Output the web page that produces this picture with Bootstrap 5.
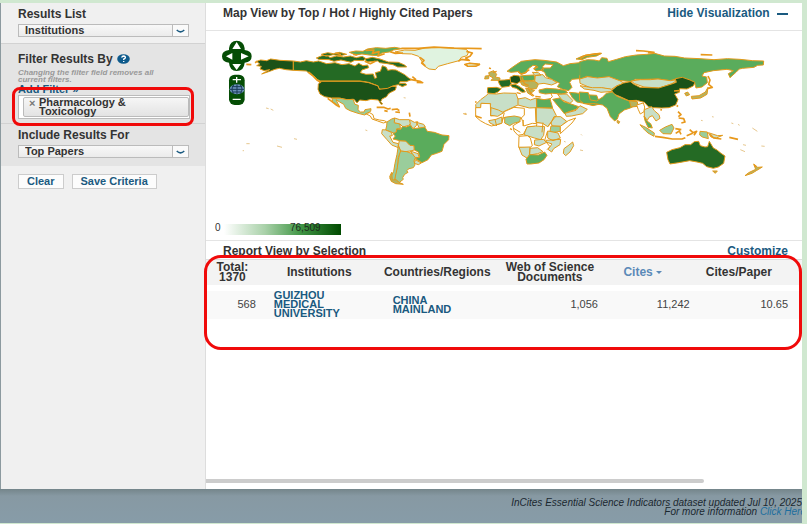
<!DOCTYPE html>
<html lang="en">
<head>
<meta charset="utf-8">
<meta name="viewport" content="width=device-width, initial-scale=1">
<title>Essential Science Indicators</title>
<link href="https://cdn.jsdelivr.net/npm/bootstrap@5.3.0/dist/css/bootstrap.min.css" rel="stylesheet">
<style>
body{font-family:"Liberation Sans",Arial,sans-serif;font-size:12px;line-height:14px;color:#333;background:#d0e8d0}
a{color:#1a5a80;text-decoration:none}
.frame{min-height:100vh;padding:3px 5px 1px 0}
.work{border-left:1px solid #8c9a9f;background:#fff}
.side{flex:0 0 205px;background:#f0f0f0;border-right:1px solid #ddd}
.side-part{padding:4px 16px 0 17px}
.side-part.first{height:40px}
.shade{background:#e4e4e4;border-top:1px solid #d2d2d2}
.side h2,.heading{font-size:12px;line-height:14px;font-weight:700;margin:0;color:#333}
.picker{height:13px;margin-top:3px;border:1px solid #bbb;background:linear-gradient(#f8f8f8,#ebebeb)}
.picker select{appearance:none;border:0;background:none;font-size:11px;line-height:11px;font-weight:700;color:#333;padding:0 0 0 6px;min-width:0}
.picker svg{border-left:1px solid #bbb;background:#fafafa}
.note{font-size:8px;line-height:7px;font-weight:700;font-style:italic;color:#999;margin:3px 0 0;padding-right:12px}
.add{font-size:11px;line-height:12px;font-weight:700}
.chips{border:1px solid #bbb;background:#fff;padding:1px 0 1px 4px;height:24px;margin-right:-1px}
.chip{border:1px solid #bbb;border-radius:2px;background:linear-gradient(#f6f6f6,#e3e3e3);font-size:11px;line-height:9px;font-weight:700;padding:0 0 0 5px;height:20px}
.chip button{border:0;background:none;padding:0;color:#777;font-size:11px;line-height:9px;font-weight:700;width:10px;height:10px;text-align:left}
.act{border:1px solid #ccc;background:#fcfcfc;color:#1a5a80;font-size:11px;line-height:13px;font-weight:700;padding:0 8px;border-radius:0}
.ring{position:absolute;border:3px solid #f00a0a;pointer-events:none}
.ring-side{left:11px;right:11px;top:43px;height:39px;border-radius:8px}
.ring-table{left:-2px;right:0;top:14px;height:95px;border-radius:17px}
.map-head{height:28px;padding:3px 13px 0 17px;border-bottom:1px solid #e4e4e4}
.map-box{border-bottom:1px solid #e4e4e4}
.map-box>svg{display:block;width:100%;height:auto}
.report-head{height:18px;padding:3px 14px 0 17px}
.report{table-layout:fixed;width:100%}
.report th{height:25px;background:#f3f3f3;font-size:12px;line-height:10px;padding:0;text-align:center;vertical-align:middle;border-top:1px solid #ddd}
.report tbody td{height:28px;background:#f9f9f9;font-size:11px;line-height:9px;padding:0 5px 0 0;text-align:right;vertical-align:middle;color:#444}
.report tbody .space td{height:6px;background:#fff;line-height:0}
.report tbody .nm{text-align:left;padding:0 0 0 13px;font-weight:700}
.report tbody .nm.second{padding-left:15px}
.report .c1{padding-right:2px}.report .c5{padding-right:12px}.report .c6{padding-right:19px}
.report tbody td:last-child{padding-right:14px}
.c5 a{color:#5b8ab8}
.track{height:4px;width:83.5%;background:#ccc;border-radius:0 3px 3px 0;margin-bottom:6px}
.foot{height:34px;padding-top:9px;background:linear-gradient(#74858a,#8799a3 7px,#879ca8);font-size:10px;line-height:9px;font-style:italic;color:#1b2830;text-align:right;white-space:nowrap;overflow:hidden}
.foot p{margin:0}.foot p+p{margin-right:-4px}
.foot a{color:#1d6e9e}
.land path{stroke:#e29a1b;stroke-width:3;stroke-linejoin:round}
.a1{fill:#1b5218}.a2{fill:#246a24}.a3{fill:#5aac5c}.a4{fill:#9acd9b}.a5{fill:#c8dfc7}.a6{fill:#e0f3e0}.a0{fill:#fff}.ao{fill:#b5b35f}
.land .bits{fill:none;stroke:#e8981b;stroke-width:5}
.land .dots{fill:none;stroke:#d9ab55;stroke-width:2}
</style>
<script src="https://cdn.jsdelivr.net/npm/bootstrap@5.3.0/dist/js/bootstrap.bundle.min.js"></script>
</head>
<body>
<div class="frame d-flex flex-column">
<div class="work d-flex flex-grow-1">
<aside class="side">
  <section class="side-part first">
    <h2><label for="list">Results List</label></h2>
    <div class="picker d-flex"><select id="list" class="flex-grow-1"><option>Institutions</option></select><svg width="16" height="11" viewBox="0 0 16 11"><path d="M4 5Q8 9 12 5" fill="none" stroke="#1a5a80" stroke-width="1.6"/></svg></div>
  </section>
  <section class="side-part shade position-relative pb-1">
    <h2 class="d-flex align-items-center pt-1">Filter Results By
      <svg class="ms-1" width="13" height="10" viewBox="0 0 13 10"><ellipse cx="6.5" cy="5" rx="6.3" ry="4.8" fill="#0d5a8c"/><path d="M4.7 3.7Q5 2 6.7 2Q8.5 2.1 8.4 3.5Q8.2 4.5 6.7 5.1V6.1M6.7 7V8" fill="none" stroke="#fff" stroke-width="1.3"/></svg></h2>
    <p class="note">Changing the filter field removes all current filters.</p>
    <a class="add d-block" href="#">Add Filter »</a>
    <div class="chips"><div class="chip d-flex"><button type="button" aria-label="Remove filter">×</button><span>Pharmacology &amp;<br>Toxicology</span></div></div>
    <div class="ring ring-side"></div>
  </section>
  <section class="side-part shade pb-2">
    <h2><label for="papers">Include Results For</label></h2>
    <div class="picker d-flex"><select id="papers" class="flex-grow-1"><option>Top Papers</option></select><svg width="16" height="11" viewBox="0 0 16 11"><path d="M4 5Q8 9 12 5" fill="none" stroke="#1a5a80" stroke-width="1.6"/></svg></div>
  </section>
  <section class="side-part pt-2 d-flex gap-2">
    <button class="act" type="button">Clear</button>
    <button class="act" type="button">Save Criteria</button>
  </section>
</aside>
<main class="flex-grow-1 d-flex flex-column">
  <div class="map-head d-flex justify-content-between">
    <h1 class="heading">Map View by Top / Hot / Highly Cited Papers</h1>
    <a class="heading" href="#"><span style="color:#1a5a80">Hide Visualization</span> <svg class="ms-1" width="12" height="8" viewBox="0 0 12 8"><path d="M0 4H11" stroke="#1a5a80" stroke-width="2"/></svg></a>
  </div>
  <div class="map-box">
  <svg viewBox="206 31 596 209" role="img" aria-label="World map of cited papers">
    <defs><linearGradient id="scale"><stop offset="0" stop-color="#fff"/><stop offset=".35" stop-color="#a9d1a9"/><stop offset=".65" stop-color="#429747"/><stop offset="1" stop-color="#004a00"/></linearGradient></defs>
    <!-- the Americas -->
    <g class="land" transform="translate(240 30) scale(.33333)">
      <path class="a1" d="M50 94L62 90L80 92L92 87L120 91L160 93L160 121L138 119L118 115L105 118L92 123L65 132L89 119L73 122L60 117L64 109L50 107L59 102Z"/>
      <path class="a2" d="M160 93L181 96L199 92L220 96L236 93L260 101L285 98L306 104L327 101L345 108L356 100L369 107L383 105L386 113L366 120L361 128L378 133L400 132L404 145L410 143L406 128L421 124L427 107L439 112L443 121L455 119L468 120L481 127L494 134L505 143L514 149L499 155L480 155L478 160L495 160L501 164L487 170L475 164L458 168L446 175L423 178L416 175L415 168L386 157L360 153L242 153L233 149L222 139L211 133L199 123L160 121Z"/>
      <path class="a2" d="M229 84L246 77L263 76L270 83L290 78L311 81L331 78L349 83L367 79L378 86L370 92L344 91L333 97L303 90L282 94L267 89L236 88ZM244 73L263 68L280 71L298 67L320 73L300 77L279 74L259 79ZM374 87L397 82L420 87L445 96L475 97L494 105L500 111L473 111L459 104L442 101L419 98L413 93L381 96Z"/>
      <path class="a3" d="M328 67L347 63L369 64L382 57L409 53L437 55L464 52L487 56L461 60L448 66L426 69L414 77L387 75L366 72L347 75Z"/>
      <path class="a1" d="M242 154L360 154L386 158L414 168L418 178L443 175L456 169L469 170L466 180L450 188L444 193L440 200L426 207L422 215L428 222L423 223L415 210L393 208L378 212L359 210L351 219L342 208L320 209L298 204L274 204L254 200L240 192L234 178L235 163Z"/>
      <path class="a4" d="M276 205L301 205L321 209L339 208L345 223L355 226L354 239L361 246L372 246L375 239L393 236L392 244L383 249L374 255L354 250L330 242L317 235L311 223L299 216L288 209L294 221L299 231L288 222L278 216Z"/>
      <path class="a0" d="M377 251L389 248L399 254L402 266L418 270L433 272L440 276L430 279L413 273L396 267L391 258Z"/>
      <path class="a4" d="M441 276L455 267L464 264L463 278L480 282L481 296L470 297L468 313L454 306L437 300L440 288Z"/>
      <path class="a5" d="M464 264L479 269L507 269L514 279L506 286L489 291L480 282L463 278ZM427 299L437 300L454 307L457 317L449 318L459 337L475 341L475 353L455 345L441 329L425 311ZM478 332L498 333L510 346L523 347L523 360L511 363L496 365L482 363L475 347Z"/>
      <path class="a3" d="M459 311L469 306L470 297L482 298L488 289L499 291L511 286L519 296L537 294L553 289L562 304L583 307L606 315L627 317L626 329L612 343L606 364L590 370L574 375L564 389L546 398L526 386L539 380L535 366L523 360L522 347L510 346L497 333L479 332L459 327L466 318Z"/>
      <path class="a5" d="M509 269L523 277L533 275L529 287L519 296L511 284ZM529 277L551 283L556 291L538 294ZM511 363L534 371L538 383L524 382ZM526 389L544 399L535 404L523 400Z"/>
      <path class="a4" d="M480 363L500 365L517 371L526 383L522 393L525 405L520 413L507 416L500 422L504 427L494 433L488 443L490 448L478 457L464 449L467 431L472 411L475 389Z"/>
      <path class="a4" d="M475 347L482 363L475 382L472 412L464 449L456 455L450 445L461 424L465 400L471 373Z"/>
      <path class="ao" d="M455 427L449 440L454 454L467 461L490 463L475 456L469 449L457 450Z"/>
      <path class="a6" d="M465 66L494 60L525 61L555 54L602 53L642 55L679 58L686 66L681 77L664 82L657 92L623 101L595 109L586 119L567 117L555 109L545 93L536 79L515 72L487 71Z"/>
      <path class="a6" d="M677 103L689 99L720 102L709 108L685 109Z"/>
      <path class="bits" d="M540 82L552 91L545 99L556 108M679 64L697 69L690 79L677 84L688 91L664 88L655 94M484 55L535 55L582 51L642 54L725 56M410 232L431 232L444 237L452 235M455 239L471 237L478 242M433 242L443 244M466 246L480 247M508 248L510 260M510 148L526 151L540 154L548 158L530 157M517 140L528 149M263 205L276 215L290 226L299 231M205 126L216 135L232 151L243 158M19 103L34 104M45 98L52 94M340 73L352 75M286 69L303 74M450 65L466 70L489 69M378 61L402 60L397 70L417 65L414 78L434 71M374 94L391 101L406 94"/>
      <path class="dots" d="M78 234L86 236M92 237L100 241M376 300L382 302M19 341L29 341M111 348L126 352M162 326L171 328M8 362L12 362M491 203L497 204M675 249L681 253"/>
    </g>
    <!-- Europe and Africa -->
    <g class="land" transform="translate(380 20) scale(.33333)">
      <path class="a3" d="M381 154L394 144L410 133L424 124L447 121L465 119L492 121L530 126L550 137L570 131L599 128L622 124L665 126L665 185L655 184L632 170L599 176L576 178L569 187L576 202L566 212L548 208L532 200L539 190L515 178L499 169L494 157L483 151L488 144L511 144L519 134L496 132L488 139L491 150L469 153L461 147L469 137L459 136L444 147L439 158L424 163L413 155L393 157Z"/>
      <path class="a3" d="M588 117L610 107L645 101L665 100L650 108L622 112L606 119Z"/>
      <path class="ao" d="M326 158L341 152L350 163L346 171L360 174L359 181L333 181L340 174L329 168ZM316 168L327 167L326 176L314 177Z"/>
      <path class="a2" d="M323 203L349 202L364 206L354 216L342 221L322 219ZM354 181L373 180L391 178L394 190L388 199L365 202L358 192Z"/>
      <path class="a1" d="M390 172L402 166L419 168L423 183L411 191L392 187Z"/>
      <path class="a2" d="M391 194L406 193L417 199L432 209L436 216L426 217L409 205L397 202Z"/>
      <path class="a3" d="M420 168L440 166L462 165L466 180L444 183L424 182Z"/>
      <path class="ao" d="M421 185L444 183L464 184L475 193L469 206L453 207L442 201L425 194ZM437 204L452 208L464 211L450 222L458 228L443 219Z"/>
      <path class="a5" d="M466 166L489 164L496 173L515 178L531 188L515 195L492 190L476 192L464 184ZM457 157L475 158L483 165L465 167Z"/>
      <path class="a3" d="M477 210L500 205L529 207L555 211L563 218L545 222L518 220L496 222L478 218Z"/>
      <path class="a5" d="M287 254L302 239L317 228L325 221L350 222L371 219L408 220L414 237L436 233L451 240L469 234L470 263L517 265L525 285L514 307L504 320L489 308L470 308L469 263L448 264L414 255L373 274L355 287L329 288L332 251L304 250L302 263L288 264Z"/>
      <path class="a3" d="M470 235L492 239L510 236L518 264L470 264Z"/>
      <path class="a0" d="M287 263L302 263L303 250L331 251L332 288L356 285L375 274L402 262L433 265L433 285L424 294L428 304L431 318L457 310L471 311L469 319L442 321L430 343L414 346L402 333L399 317L421 304L394 291L370 293L365 310L348 315L334 318L317 311L301 302L287 290Z"/>
      <path class="a5" d="M333 263L355 270L371 278L353 289L332 286ZM326 302L348 298L365 291L366 309L344 316L330 309ZM441 321L467 318L494 320L491 346L482 359L463 354L441 347L432 344ZM466 263L468 307L488 310L503 320L514 305L529 287L518 265ZM513 309L522 290L542 290L560 304L543 319L517 318Z"/>
      <path class="a4" d="M374 292L403 288L422 292L419 305L401 310L389 317L374 309ZM513 318L541 319L541 334L520 337L510 333Z"/>
      <path class="a0" d="M541 319L565 302L587 294L576 309L554 329L541 341Z"/>
      <path class="a5" d="M503 333L534 339L541 354L519 362L503 354ZM498 361L542 358L540 374L521 386L515 396L504 388L516 372L498 366Z"/>
      <path class="a0" d="M417 349L442 347L451 354L457 377L449 383L416 382Z"/>
      <path class="a5" d="M417 382L450 381L448 405L442 415L426 405ZM450 385L473 383L489 395L473 401L449 405ZM464 360L490 358L500 367L477 378L463 374Z"/>
      <path class="a3" d="M438 418L449 404L475 405L494 396L501 406L492 419L477 429L452 432L441 432Z"/>
      <path class="a5" d="M552 386L567 375L578 366L581 377L570 396L557 407L550 400Z"/>
      <path class="a3" d="M518 238L539 234L551 245L576 253L596 260L588 268L567 275L553 281L542 267L529 252Z"/>
      <path class="a5" d="M555 280L588 271L600 257L622 268L608 281L575 288L559 289ZM533 223L560 222L579 242L570 250L546 240Z"/>
      <path class="a3" d="M568 217L590 219L614 224L650 226L660 252L639 257L612 250L590 246L577 233Z"/>
      <path class="bits" style="stroke-width:4" d="M254 133L268 130L299 134L287 139L263 139ZM327 144L333 146M339 158L350 154M414 154L423 162L434 159L448 149M462 147L474 140M426 171L433 191L446 197M445 205L453 220L462 228M466 229L482 231M410 218L422 221M285 246L290 246M287 288L305 294M390 326L396 329"/>
      <path fill="none" d="M512 219L517 230L508 239M401 325L421 337M489 308L486 337M502 335L494 361L510 380L501 389M430 300L429 318M469 264V307M414 235L414 254M373 278L366 304M345 298L350 318M250 281L259 283"/>
      <path class="dots" d="M603 343L606 346M600 390L609 392M552 364L557 366"/>
    </g>
    <!-- Asia and the Pacific -->
    <g class="land" transform="translate(580 0) scale(.33333)">
      <path class="a3" d="M-1 185L22 179L43 180L58 183L65 173L81 175L85 185L110 178L136 170L169 165L200 163L224 160L253 168L285 169L314 174L360 176L402 179L442 176L480 178L518 182L551 183L550 195L533 196L522 202L488 205L478 207L469 216L450 233L445 221L460 212L441 208L400 212L372 218L366 228L380 231L382 248L366 261L348 264L344 249L314 239L293 236L270 242L234 237L192 238L166 238L154 245L115 241L88 231L52 235L20 229L-1 239Z"/>
      <path style="stroke:#5aac5c" d="M-1 188V226"/>
      <path class="a5" d="M-1 237L23 230L52 234L87 230L119 242L133 250L111 257L94 268L66 264L38 266L0 250ZM153 243L181 239L211 239L234 237L271 242L294 239L276 251L238 264L192 261L164 251Z"/>
      <path class="a1" d="M94 272L111 258L131 249L151 245L162 253L180 262L236 264L275 252L289 247L286 236L307 232L330 240L345 247L340 258L321 267L299 266L298 277L284 282L294 299L287 315L267 323L245 324L221 323L205 320L193 307L169 301L147 302L118 289L103 283Z"/>
      <path class="a5" d="M0 257L37 263L65 263L92 267L97 274L63 277L42 271L13 267Z"/>
      <path class="a3" d="M-2 276L25 278L31 300L50 303L68 291L79 280L97 276L111 289L147 303L169 306L180 320L162 318L151 324L133 330L117 342L112 357L104 363L91 350L81 325L68 315L46 311L12 311L-1 301Z"/>
      <path class="ao" d="M112 361L119 365L116 371L111 367ZM148 302L172 305L174 319L153 321Z"/>
      <path class="a0" d="M170 315L190 309L194 321L192 335L181 342L175 329ZM205 375L216 378L206 384Z"/>
      <path class="a5" d="M193 329L215 320L223 332L237 344L240 355L228 363L217 347L207 352L202 361L193 349Z"/>
      <path class="a3" d="M192 348L201 363L212 371L217 384L204 382L195 362Z"/>
      <path class="a4" d="M180 374L197 382L223 399L222 409L204 399L189 385ZM239 391L256 381L276 373L282 384L273 402L249 401ZM360 394L382 396L385 416L367 411L359 405Z"/>
      <path class="a5" d="M385 398L413 407L428 406L409 414L393 411Z"/>
      <path class="a2" d="M260 457L276 449L300 443L315 434L332 434L343 425L356 424L361 437L375 441L383 440L388 424L400 444L411 450L423 460L435 468L431 490L415 501L400 505L380 500L368 490L351 486L329 482L296 488L270 492L264 479Z"/>
      <path class="ao" d="M398 513L412 513L406 520ZM521 492L533 502L547 501L529 512L516 520L495 527L506 518L527 508Z"/>
      <path class="ao" d="M334 289L357 287L376 276L384 262L381 283L362 294L336 297ZM314 280L323 276L329 284L319 288Z"/>
      <path class="bits" d="M0 176L18 166L62 160M168 152L191 153L222 157L204 158M362 164L397 165M384 228L390 240L386 253L397 262L384 265M282 273L297 272M225 409L248 412L277 417L306 417L316 413M286 386L304 389M287 400L298 393L303 403M294 335L303 344L295 350M296 354L311 356L315 366L304 369M329 389L339 398L350 394L342 406M390 403L401 414L424 417M241 329L246 330M290 320L294 316M448 412L474 418M320 407L338 400M523 495L528 500"/>
      <path class="dots" d="M363 361L368 362M396 350L401 351M454 369L460 371M474 373L479 376M517 384L532 394M481 449L495 455M489 434L498 436M544 438L554 439"/>
    </g>
    <!-- pan and zoom controls -->
    <g transform="translate(205 0) scale(.33333)">
      <path d="M72 145Q75 122 95 122Q116 122 119 145V150Q140 152 140 169Q140 186 119 188Q117 213 95 213Q74 213 72 188Q51 186 51 169Q51 152 72 150Z" fill="#054d05"/>
      <path d="M95 126L108 147H82ZM95 210L108 192H82ZM63 169L82 159V179ZM131 169L108 159V179Z" fill="#fff"/>
      <rect x="72" y="224" width="47" height="91" rx="17" fill="#054d05"/>
      <ellipse cx="96" cy="268" rx="22" ry="15" fill="#6c91b9"/><path d="M75 268H117M81 260H111M81 276H111M96 253V283M86 255Q76 268 86 281M106 255Q116 268 106 281" fill="none" stroke="#173955" stroke-width="3"/>
      <path d="M83 239H108M95 231V248M83 298H107" stroke="#fff" stroke-width="4"/>
    </g>
    <rect x="224" y="224" width="117" height="11" fill="url(#scale)"/>
    <text x="215" y="231" font-size="10" fill="#333">0</text><text x="290" y="231" font-size="10" fill="#1c2c1c">76,509</text>
  </svg>
  </div>
  <section class="position-relative">
    <div class="report-head d-flex justify-content-between"><h2 class="heading">Report View by Selection</h2><a href="#" class="fw-bold">Customize</a></div>
    <table class="report">
      <colgroup><col style="width:9.2%"><col style="width:19.6%"><col style="width:20%"><col style="width:17.8%"><col style="width:15.4%"><col style="width:18%"></colgroup>
      <thead><tr><th class="c1">Total:<br>1370</th><th>Institutions</th><th>Countries/Regions</th><th>Web of Science<br>Documents</th><th class="c5"><a href="#">Cites <svg width="6" height="4" viewBox="0 0 6 4" class="align-middle"><path d="M0 0H6L3 3Z" fill="#5b8ab8"/></svg></a></th><th class="c6">Cites/Paper</th></tr></thead>
      <tbody>
        <tr class="space"><td colspan="6"></td></tr>
        <tr><td>568</td><td class="nm"><a href="#">GUIZHOU<br>MEDICAL<br>UNIVERSITY</a></td><td class="nm second"><a href="#">CHINA<br>MAINLAND</a></td><td>1,056</td><td>11,242</td><td>10.65</td></tr>
      </tbody>
    </table>
    <div class="ring ring-table"></div>
  </section>
  <div class="track mt-auto"></div>
</main>
</div>
<footer class="foot">
  <p>InCites Essential Science Indicators dataset updated Jul 10, 2025</p>
  <p>For more information <a href="#">Click Here</a></p>
</footer>
</div>
</body>
</html>
